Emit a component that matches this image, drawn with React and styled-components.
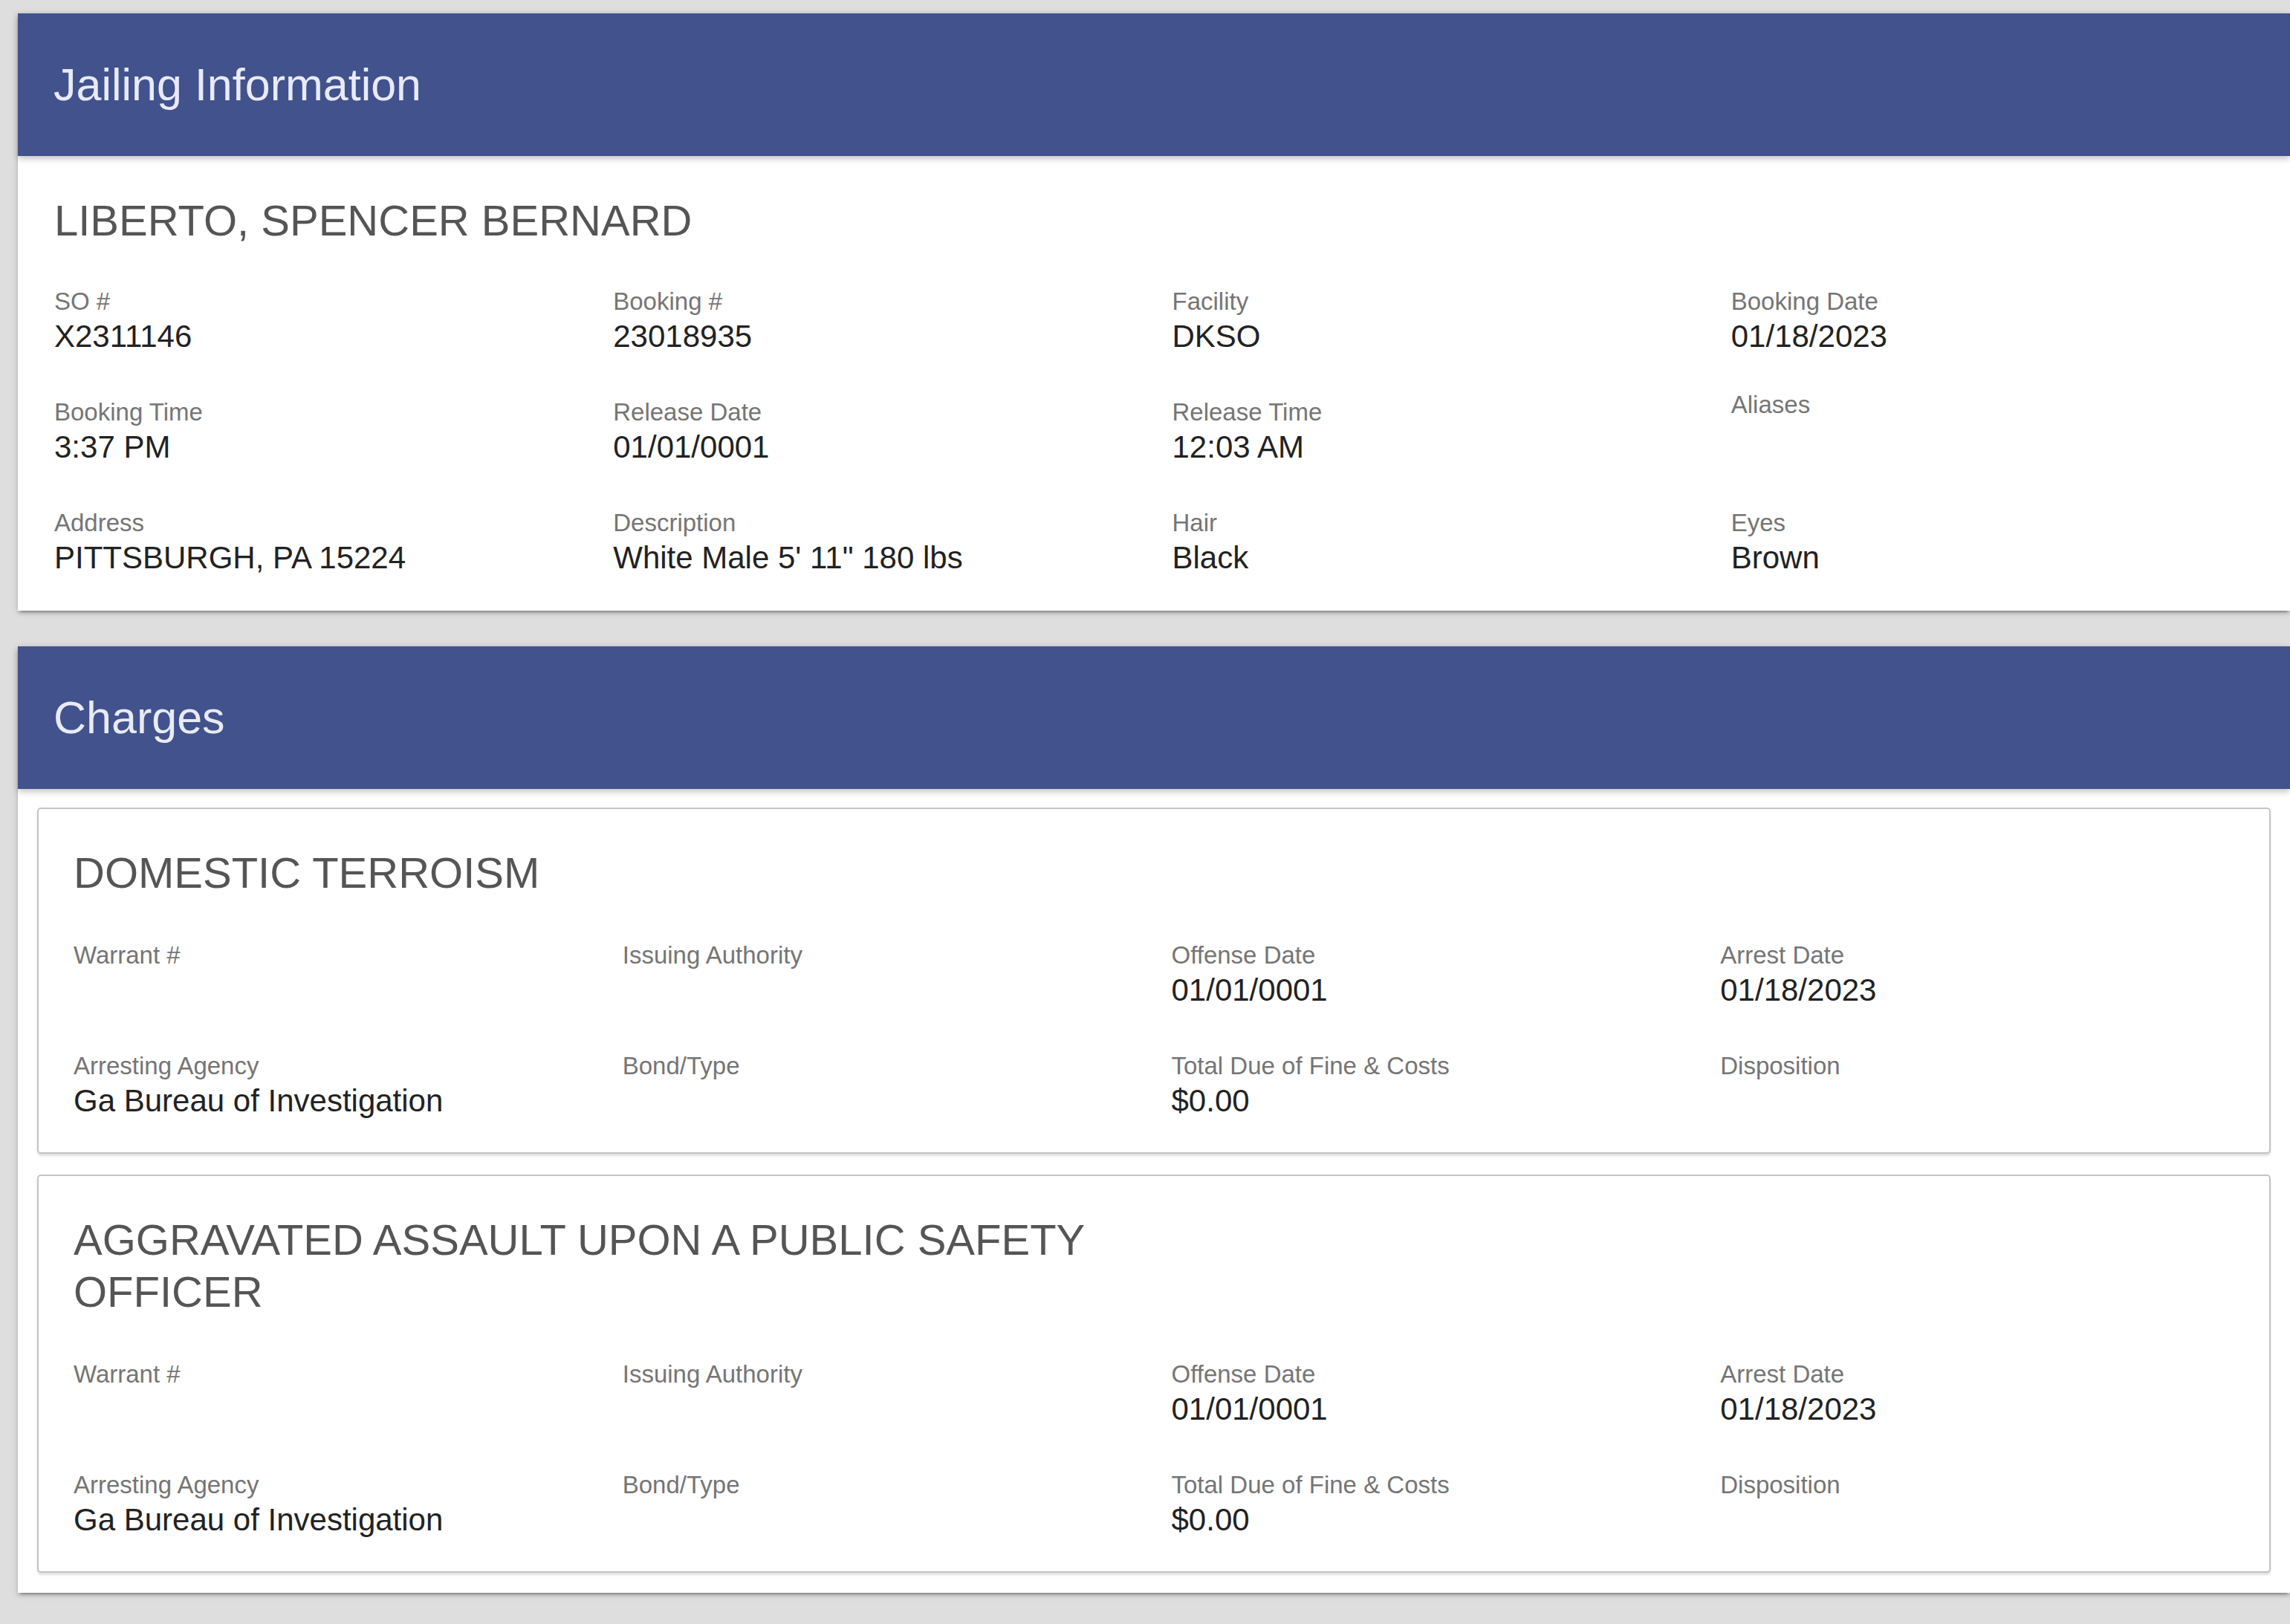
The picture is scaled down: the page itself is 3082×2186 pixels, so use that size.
import styled, { createGlobalStyle } from "styled-components";

const GlobalStyle = createGlobalStyle`
  html,
  body {
    margin: 0;
    padding: 0;
    background: #dedede;
    overflow: hidden;
  }

  body {
    font-family: "Liberation Sans", Helvetica, Arial, sans-serif;
  }
`;

const Page = styled.div`
  display: flex;
  flex-direction: column;
  gap: 48px;
  padding: 18px 0 40px 24px;
  min-height: 2186px;
  box-sizing: border-box;
`;

const Card = styled.section`
  background: #fff;
  box-shadow: 0 4px 4px rgba(0, 0, 0, 0.14), 0 6px 2px -4px rgba(0, 0, 0, 0.2),
    0 2px 10px rgba(0, 0, 0, 0.12);
`;

const CardHeader = styled.header`
  display: flex;
  align-items: center;
  height: 192px;
  padding-left: 48px;
  background: #41528d;
  box-shadow: 0 4px 8px rgba(0, 0, 0, 0.22);
  position: relative;
`;

const HeaderTitle = styled.h1`
  margin: 0;
  font-size: 61px;
  font-weight: 400;
  color: #e8eaf6;
  line-height: 1;
`;

const CardBody = styled.div`
  padding: 52px 0 47px 49px;
`;

const Title = styled.h2`
  margin: 0;
  max-width: 50%;
  font-size: 58px;
  line-height: 70px;
  font-weight: 400;
  color: #555;
`;

const FieldGrid = styled.div`
  display: grid;
  grid-template-columns: repeat(4, 1fr);
  row-gap: 59px;
  margin-top: ${(p) => p.$offset || 55}px;
`;

const Field = styled.div`
  display: flex;
  flex-direction: column;
  margin-top: ${(p) => (p.$lift ? -10 : 0)}px;
`;

const Label = styled.span`
  font-size: 33px;
  line-height: 38px;
  color: #757575;
`;

const Value = styled.span`
  margin-top: 4px;
  font-size: 42px;
  line-height: 48px;
  color: #222;
  white-space: pre;
`;

const ChargeList = styled.div`
  display: flex;
  flex-direction: column;
  gap: 28px;
  padding: 25px 26px 27px 26px;
`;

const ChargeCard = styled.article`
  background: #fff;
  border: 2px solid #c4c4c4;
  border-radius: 5px;
  padding: 51px 0 45px 47px;
  box-shadow: 0 3px 3px rgba(0, 0, 0, 0.12);
`;

const jailing = [
  { label: "SO #", value: "X2311146" },
  { label: "Booking #", value: "23018935" },
  { label: "Facility", value: "DKSO" },
  { label: "Booking Date", value: "01/18/2023" },
  { label: "Booking Time", value: "3:37 PM" },
  { label: "Release Date", value: "01/01/0001" },
  { label: "Release Time", value: "12:03 AM" },
  { label: "Aliases", value: "", lift: true },
  { label: "Address", value: "PITTSBURGH, PA 15224" },
  { label: "Description", value: 'White Male 5\' 11" 180 lbs' },
  { label: "Hair", value: "Black" },
  { label: "Eyes", value: "Brown" },
];

const charges = [
  { title: "DOMESTIC TERROISM" },
  { title: "AGGRAVATED ASSAULT UPON A PUBLIC SAFETY OFFICER" },
];

const chargeFields = [
  { label: "Warrant #", value: "" },
  { label: "Issuing Authority", value: "" },
  { label: "Offense Date", value: "01/01/0001" },
  { label: "Arrest Date", value: "01/18/2023" },
  { label: "Arresting Agency", value: "Ga Bureau of Investigation" },
  { label: "Bond/Type", value: "" },
  { label: "Total Due of Fine & Costs", value: "$0.00" },
  { label: "Disposition", value: "" },
];

const Fields = ({ items, offset }) => (
  <FieldGrid $offset={offset}>
    {items.map((f) => (
      <Field key={f.label} $lift={f.lift}>
        <Label>{f.label}</Label>
        <Value>{f.value || " "}</Value>
      </Field>
    ))}
  </FieldGrid>
);

export default function App() {
  return (
    <>
      <GlobalStyle />
      <Page>
        <Card>
          <CardHeader>
            <HeaderTitle>Jailing Information</HeaderTitle>
          </CardHeader>
          <CardBody>
            <Title>LIBERTO, SPENCER BERNARD</Title>
            <Fields items={jailing} />
          </CardBody>
        </Card>

        <Card>
          <CardHeader>
            <HeaderTitle>Charges</HeaderTitle>
          </CardHeader>
          <ChargeList>
            {charges.map((c) => (
              <ChargeCard key={c.title}>
                <Title>{c.title}</Title>
                <Fields items={chargeFields} offset={57} />
              </ChargeCard>
            ))}
          </ChargeList>
        </Card>
      </Page>
    </>
  );
}
